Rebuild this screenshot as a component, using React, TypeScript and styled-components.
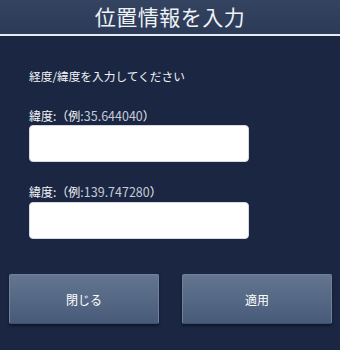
import React from "react";
import styled, { createGlobalStyle } from "styled-components";

const Global = createGlobalStyle`
  html, body { margin: 0; padding: 0; background: #1b2742; }
  body { font-family: "Noto Sans CJK JP", "Noto Sans", sans-serif; }
`;

const Screen = styled.div`
  width: 340px;
  height: 350px;
  background: #1b2742;
  display: flex;
  flex-direction: column;
  overflow: hidden;
`;

const Header = styled.header`
  height: 34px;
  border-bottom: 2px solid #e6eaf1;
  background: linear-gradient(#334360, #2b3a57);
  color: #eef1f6;
  font-size: 21px;
  line-height: 33px;
  text-align: center;
  letter-spacing: 0.5px;
`;

const Body = styled.div`
  display: flex;
  flex-direction: column;
  padding: 0 0 0 29px;
`;

const Instruction = styled.p`
  margin: 32px 0 0;
  font-size: 11.7px;
  line-height: 16px;
  color: #f2f4f8;
`;

const Label = styled.label<{ $top: number }>`
  margin-top: ${(p) => p.$top}px;
  font-size: 12px;
  line-height: 16px;
  color: #f2f4f8;
`;

const Sample = styled.span`
  color: #c3cbd8;
  font-size: 12.5px;
`;

const Field = styled.input<{ $top: number }>`
  margin-top: ${(p) => p.$top}px;
  width: 220px;
  height: 37px;
  box-sizing: border-box;
  border: 1px solid #d6dae2;
  border-radius: 4px;
  background: #ffffff;
  outline: none;
  padding: 0 8px;
  font-size: 14px;
`;

const ButtonRow = styled.div`
  display: flex;
  gap: 23px;
  padding-left: 9px;
  margin-top: 35px;
`;

const Button = styled.button`
  width: 150px;
  height: 50px;
  border: 1px solid #6f819c;
  border-bottom-color: #3e506c;
  border-radius: 2px;
  background: linear-gradient(#63758f, #475b79);
  box-shadow: 0 2px 3px rgba(5, 10, 25, 0.6);
  color: #ffffff;
  font-family: "Noto Sans CJK JP", "Noto Sans", sans-serif;
  font-size: 12px;
  padding: 0;
`;

export default function App() {
  return (
    <>
      <Global />
      <Screen>
        <Header>位置情報を入力</Header>
        <Body>
          <Instruction>経度/緯度を入力してください</Instruction>
          <Label $top={24}>
            緯度:（例<Sample>:35.644040</Sample>）
          </Label>
          <Field $top={1} />
          <Label $top={22}>
            緯度:（例<Sample>:139.747280</Sample>）
          </Label>
          <Field $top={2} />
        </Body>
        <ButtonRow>
          <Button>閉じる</Button>
          <Button>適用</Button>
        </ButtonRow>
      </Screen>
    </>
  );
}
